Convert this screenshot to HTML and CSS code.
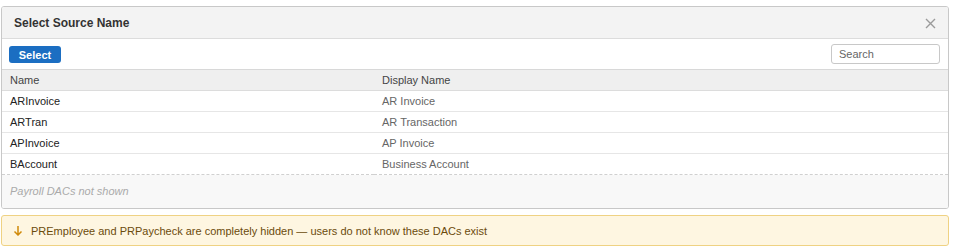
FILE: index.html
```html
<!DOCTYPE html>
<html>
    <head>
        <title>Select Source Name</title>
        <link rel="stylesheet" href="styles.css">
    </head>
<body>
    <div class="page">
        <div class="dialog">
            <div class="dialog-header">
                <span class="dialog-title">Select Source Name</span>
                <span class="close">
                    <svg width="11" height="11" viewBox="0 0 11 11"><path d="M1 1 L10 10 M10 1 L1 10" stroke="#9a9a9a" stroke-width="1.4" fill="none"/></svg>
                </span>
            </div>

            <div class="toolbar">
                <button class="button">Select</button>
                <input type="text" class="search" placeholder="Search">
            </div>

            <table class="grid">
                <thead>
                    <tr>
                        <th class="col-name">Name</th>
                        <th>Display Name</th>
                    </tr>
                </thead>
                <tbody>
                    <tr><td class="col-name">ARInvoice</td><td class="display">AR Invoice</td></tr>
                    <tr><td class="col-name">ARTran</td><td class="display">AR Transaction</td></tr>
                    <tr><td class="col-name">APInvoice</td><td class="display">AP Invoice</td></tr>
                    <tr class="last"><td class="col-name">BAccount</td><td class="display">Business Account</td></tr>
                </tbody>
            </table>

            <div class="footer">Payroll DACs not shown</div>
        </div>

        <div class="warning">
            <svg class="warn-icon" width="10" height="11" viewBox="0 0 10 11"><path d="M5 1 V10 M1.5 6.5 L5 10 L8.5 6.5" stroke="#d08a0a" stroke-width="1.5" fill="none"/></svg>
            <span>PREmployee and PRPaycheck are completely hidden — users do not know these DACs exist</span>
        </div>
    </div>
</body>
</html>
```

FILE: styles.css
```css
body {
    margin: 0;
    font-family: "Liberation Sans", Arial, sans-serif;
    font-size: 11px;
    color: #222;
    background-color: #fff;
}

.page {
    padding: 6px 6px 6px 1px;
}

.dialog {
    border: 1px solid #c8c8c8;
    border-radius: 3px;
    background-color: #fff;
    overflow: hidden;
}

.dialog-header {
    height: 31px;
    display: flex;
    align-items: center;
    justify-content: space-between;
    padding: 0 12px 0 12px;
    background-color: #f3f3f3;
    border-bottom: 1px solid #dcdcdc;
}

.dialog-title {
    font-size: 12px;
    font-weight: bold;
    color: #333;
}

.close {
    display: flex;
    padding-top: 1px;
}

.toolbar {
    height: 30px;
    display: flex;
    align-items: center;
    justify-content: space-between;
    padding: 0 8px 0 7px;
    border-bottom: 1px solid #d8d8d8;
}

.button {
    width: 52px;
    height: 17px;
    margin-top: 1px;
    padding: 0;
    background-color: #1b6ec2;
    color: #fff;
    font-family: "Liberation Sans", Arial, sans-serif;
    font-size: 11px;
    font-weight: bold;
    border: none;
    border-radius: 3px;
}

.search {
    box-sizing: border-box;
    width: 109px;
    height: 20px;
    padding: 0 7px;
    font-family: "Liberation Sans", Arial, sans-serif;
    font-size: 11px;
    border: 1px solid #c8c8c8;
    border-radius: 3px;
}

.search::placeholder {
    color: #666;
}

.grid {
    width: 100%;
    border-collapse: collapse;
}

.grid th {
    height: 20px;
    padding: 0 8px;
    text-align: left;
    font-weight: normal;
    color: #444;
    background-color: #efefef;
    border-bottom: 1px solid #dcdcdc;
}

.grid td {
    height: 20px;
    padding: 0 8px;
    border-bottom: 1px solid #e6e6e6;
}

.grid tr.last td {
    border-bottom: 1px dashed #d0d0d0;
}

.col-name {
    width: 356px;
}

.display {
    color: #666;
}

.footer {
    height: 33px;
    line-height: 33px;
    padding-left: 8px;
    background-color: #f8f8f8;
    color: #aaa;
    font-style: italic;
}

.warning {
    margin-top: 6px;
    height: 29px;
    display: flex;
    align-items: center;
    padding-left: 11px;
    background-color: #fef6e1;
    border: 1px solid #efd283;
    border-radius: 3px;
    color: #6b4b0c;
}

.warn-icon {
    margin-right: 8px;
}
```
